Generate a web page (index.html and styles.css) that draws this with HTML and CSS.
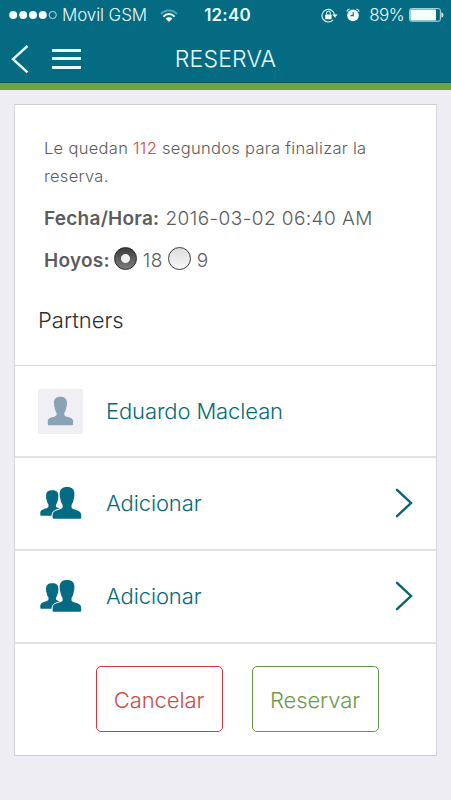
FILE: index.html
```html
<!DOCTYPE html>
<html lang="es">
<head>
    <meta charset="UTF-8">
    <meta name="viewport" content="width=device-width, initial-scale=1">
    <title>Reserva</title>
    <link rel="stylesheet" href="styles.css">
</head>
<body>
    <header class="header">
        <div class="status">
            <div class="status-left">
                <svg class="signal" width="49" height="10" viewBox="0 0 49 10">
                    <circle cx="4.2" cy="5" r="4"/>
                    <circle cx="14.2" cy="5" r="4"/>
                    <circle cx="24" cy="5" r="4"/>
                    <circle cx="33.8" cy="5" r="4"/>
                    <circle class="off" cx="43.7" cy="5" r="3.6"/>
                </svg>
                <span class="carrier">Movil GSM</span>
                <svg class="wifi" width="18" height="13" viewBox="0 0 18 13">
                    <path class="faded" d="M1 5 C5 0.4 13 0.4 17 5"/>
                    <path d="M3.4 7.6 C6.5 4.2 11.5 4.2 14.6 7.6"/>
                    <path class="dot" d="M9 13 L5.6 9.6 C7.4 7.9 10.6 7.9 12.4 9.6 Z"/>
                </svg>
            </div>
            <span class="clock">12:40</span>
            <div class="status-right">
                <svg class="lock" width="17" height="15" viewBox="0 0 17 15">
                    <path class="line" d="M12 11.9 A6.3 6.3 0 1 1 13.6 7.2"/>
                    <path d="M11.3 6.6 H16.5 L13.9 9.8 Z"/>
                    <rect x="4.2" y="6.6" width="6.4" height="4.6" rx="0.6"/>
                    <path class="line" d="M5.5 6.8 V5.2 A1.9 1.9 0 0 1 9.3 5.2 V6.8"/>
                </svg>
                <svg class="alarm" width="14" height="14" viewBox="0 0 14 14">
                    <circle cx="7" cy="7.4" r="5.8"/>
                    <path class="bell" d="M0.8 3.6 Q1.4 1.5 3.6 1 M10.4 1 Q12.6 1.5 13.2 3.6"/>
                    <path class="hand" d="M7.2 4.2 V7.6 H4.6"/>
                </svg>
                <span class="percent">89%</span>
                <svg class="battery" width="35" height="14" viewBox="0 0 35 14">
                    <rect class="shell" x="0.6" y="0.6" width="30.8" height="12.6" rx="1.8"/>
                    <rect x="1.4" y="1.4" width="25.6" height="11" rx="0.6"/>
                    <path d="M32.5 4.2 Q34.4 5 34.4 7 Q34.4 9 32.5 9.8 Z"/>
                </svg>
            </div>
        </div>
        <nav class="navbar">
            <a class="back" href="#" aria-label="Atrás">
                <svg width="18" height="30" viewBox="0 0 18 30">
                    <path d="M16.5 2 L2 15.2 L16.5 28.4"/>
                </svg>
            </a>
            <a class="menu" href="#" aria-label="Menú">
                <span></span>
                <span></span>
                <span></span>
            </a>
            <h1 class="title">RESERVA</h1>
        </nav>
    </header>

    <main class="card">
        <section class="info">
            <p class="timer">Le quedan <span class="seconds">112</span> segundos para finalizar la <br>reserva.</p>
            <p class="detail date"><b>Fecha/Hora:</b> <span>2016-03-02 06:40 AM</span></p>
            <form class="detail holes">
                <b>Hoyos:</b>
                <label><input class="radio" type="radio" name="hoyos" value="18" checked>18</label>
                <label><input class="radio" type="radio" name="hoyos" value="9">9</label>
            </form>
            <h2 class="subtitle">Partners</h2>
        </section>

        <ul class="partners">
            <li class="partner">
                <div class="avatar">
                    <svg width="27" height="30" viewBox="0 0 27 30">
                        <path d="M13.3 0.7 C18 0.7 20.2 3 19.9 7.4 C20 9 19.7 10.4 19.3 11.6 C19 14 18.3 15.6 17.3 17 V19 C18.2 21.6 25.8 20.6 26.1 25 V28.4 Q26 29.2 25.2 29.2 H1.7 Q0.9 29.2 0.8 28.4 V25 C1.1 20.6 8.7 21.6 9.6 19 V17 C8.6 15.6 7.9 14 7.6 11.6 C7.2 10.4 6.9 9 7 7.4 C6.7 3 8.9 0.7 13.3 0.7 Z"/>
                    </svg>
                </div>
                <span class="name">Eduardo Maclean</span>
            </li>
            <li class="partner">
                <div class="people">
                    <svg width="42" height="34" viewBox="0 0 42 34">
                        <path d="M12.2 4.2 C16.6 4.2 18.6 6.1 18.4 10.2 C18.4 11.8 18.2 13 17.8 13.9 C17.4 16.2 16.8 17.4 16 18.5 V20.5 C16.8 22.3 23 22.4 23.4 26 V29.8 H0.9 Q0.3 29.8 0.3 29 V26.6 C0.6 22.4 7.4 23.4 8.5 20.5 V18.5 C7.7 17.4 7 16.2 6.7 13.9 C6.2 13 6 11.8 6.1 10.2 C5.9 6.1 8 4.2 12.2 4.2 Z"/>
                        <path class="front" d="M27 1 C32.4 1 34.6 3.5 34.4 8.6 C34.4 10.4 34.1 12 33.7 13.1 C33.3 15.9 32.5 17.7 31.5 19 V21.6 C32.5 24.4 40.9 23.4 41.2 28.6 V32 Q41 32.8 40.2 32.8 H13.6 Q12.8 32.8 12.6 32 V28.6 C12.9 23.4 21.6 24.4 22.6 21.6 V19 C21.6 17.7 20.8 15.9 20.4 13.1 C20 12 19.7 10.4 19.7 8.6 C19.5 3.5 21.9 1 27 1 Z"/>
                    </svg>
                </div>
                <a class="name" href="#">Adicionar</a>
                <svg class="arrow" width="18" height="30" viewBox="0 0 18 30">
                    <path d="M2 1.8 L16 15 L2 28.2"/>
                </svg>
            </li>
            <li class="partner">
                <div class="people">
                    <svg width="42" height="34" viewBox="0 0 42 34">
                        <path d="M12.2 4.2 C16.6 4.2 18.6 6.1 18.4 10.2 C18.4 11.8 18.2 13 17.8 13.9 C17.4 16.2 16.8 17.4 16 18.5 V20.5 C16.8 22.3 23 22.4 23.4 26 V29.8 H0.9 Q0.3 29.8 0.3 29 V26.6 C0.6 22.4 7.4 23.4 8.5 20.5 V18.5 C7.7 17.4 7 16.2 6.7 13.9 C6.2 13 6 11.8 6.1 10.2 C5.9 6.1 8 4.2 12.2 4.2 Z"/>
                        <path class="front" d="M27 1 C32.4 1 34.6 3.5 34.4 8.6 C34.4 10.4 34.1 12 33.7 13.1 C33.3 15.9 32.5 17.7 31.5 19 V21.6 C32.5 24.4 40.9 23.4 41.2 28.6 V32 Q41 32.8 40.2 32.8 H13.6 Q12.8 32.8 12.6 32 V28.6 C12.9 23.4 21.6 24.4 22.6 21.6 V19 C21.6 17.7 20.8 15.9 20.4 13.1 C20 12 19.7 10.4 19.7 8.6 C19.5 3.5 21.9 1 27 1 Z"/>
                    </svg>
                </div>
                <a class="name" href="#">Adicionar</a>
                <svg class="arrow" width="18" height="30" viewBox="0 0 18 30">
                    <path d="M2 1.8 L16 15 L2 28.2"/>
                </svg>
            </li>
        </ul>

        <div class="actions">
            <button class="btn cancel" type="button">Cancelar</button>
            <button class="btn reserve" type="button">Reservar</button>
        </div>
    </main>
</body>
</html>
```

FILE: styles.css
```css
* {
    box-sizing: border-box;
}
body {
    margin: 0;
    min-height: 800px;
    background-color: #eeedf3;
    font-family: Inter, "Liberation Sans", sans-serif;
    font-weight: 350;
    color: #5c5c5c;
}
h1, h2, p, ul {
    margin: 0;
    padding: 0;
    font-weight: inherit;
    list-style: none;
}
a {
    color: inherit;
    text-decoration: none;
}
svg {
    display: block;
    flex: none;
}

/* header */
.header {
    height: 90px;
    background-color: #046b83;
    border-bottom: 7px solid #6ba443;
    box-shadow: inset 0 -1px 0 #17545a;
    color: #e9fbfd;
}
.status {
    display: grid;
    grid-template-columns: 1fr auto 1fr;
    align-items: center;
    height: 30px;
    padding: 0 7px 0 9px;
    font-size: 17px;
}
.status svg {
    fill: #f4ffff;
}
.status-left, .status-right {
    display: flex;
    align-items: center;
}
.status-right {
    justify-content: flex-end;
}
.signal .off {
    fill: none;
    stroke: #c5e8ee;
    stroke-width: 0.9;
}
.carrier {
    margin-left: 4px;
    letter-spacing: -0.1px;
}
.wifi {
    margin-left: 13px;
}
.status .wifi path {
    fill: none;
    stroke: #f4ffff;
    stroke-width: 2;
}
.status .wifi .faded {
    stroke: #5ba3b1;
}
.status .wifi .dot {
    fill: #f4ffff;
    stroke: none;
}
.clock {
    padding-left: 2px;
    font-weight: 600;
    letter-spacing: 0.2px;
}
.status .line {
    fill: none;
    stroke: #e4f8fa;
    stroke-width: 1.1;
}
.alarm {
    margin-left: 8px;
}
.status .bell {
    fill: none;
    stroke: #f4ffff;
    stroke-width: 1.2;
}
.status .hand {
    fill: none;
    stroke: #046b83;
    stroke-width: 1.2;
}
.percent {
    margin-left: 9px;
    letter-spacing: -0.6px;
}
.battery {
    margin-left: 5px;
}
.status .shell {
    fill: none;
    stroke: #b5dde4;
    stroke-width: 1;
}
.navbar {
    display: grid;
    grid-template-columns: 41px 29px 1fr 81px;
    align-items: center;
    height: 53px;
    padding: 4px 0 0 11px;
}
.back path {
    fill: none;
    stroke: #e9fbfd;
    stroke-width: 2.4;
}
.menu {
    display: flex;
    flex-direction: column;
    gap: 5.5px;
}
.menu span {
    height: 3px;
    background-color: #e9fbfd;
}
.title {
    padding-top: 1px;
    text-align: center;
    font-size: 23px;
    letter-spacing: 0.2px;
    line-height: 30px;
}

/* card */
.card {
    margin: 14px 14px 0;
    height: 652px;
    background-color: white;
    border: 1px solid #cbcad2;
    border-left-color: #d6d5de;
    border-right-color: #d6d5de;
}
.info {
    height: 260px;
    padding: 29px 24px 0 29px;
}
.timer {
    font-size: 16.5px;
    line-height: 28px;
    letter-spacing: 0.3px;
}
.seconds {
    color: #d64545;
}
.detail {
    display: flex;
    align-items: center;
    height: 42px;
    font-size: 19px;
    letter-spacing: 0.44px;
}
.detail b {
    font-weight: 600;
    letter-spacing: 0.25px;
}
.date {
    margin-top: 7px;
    gap: 6px;
}
.holes label {
    display: flex;
    align-items: center;
}
.holes label + label {
    margin-left: 1px;
}
.radio {
    appearance: none;
    width: 23px;
    height: 23px;
    margin: -3px 6px 0 4px;
    border: 1px solid #3c3c3c;
    border-radius: 50%;
    background: linear-gradient(#dcdcdc, #f8f8f8);
}
.radio:checked {
    border-color: #262626;
    background: radial-gradient(circle, #f0f0f0 4px, transparent 5px), linear-gradient(#3c3c3c, #7d7d7d);
}
.subtitle {
    margin: 22px 0 0 -6px;
    font-size: 22px;
    line-height: 34px;
    color: #2e2e2e;
}

/* partners */
.partner {
    display: flex;
    align-items: center;
    height: 93px;
    padding: 0 23px 2px;
    border-top: 2px solid #e2e2e5;
    color: #046b77;
}
.partner:first-child {
    height: 91px;
    padding-bottom: 0;
    border-top: 1px solid #d6d6da;
}
.avatar {
    display: flex;
    justify-content: center;
    align-items: center;
    width: 45px;
    height: 45px;
    padding-right: 1px;
    border-radius: 2px;
    background-color: #efeff4;
    fill: #89a2b6;
}
.people {
    width: 45px;
    padding-left: 2px;
    fill: #046b83;
}
.people .front {
    stroke: white;
    stroke-width: 2;
    paint-order: stroke;
}
.name {
    flex: 1;
    margin-left: 23px;
    font-size: 22px;
    letter-spacing: -0.12px;
}
.arrow path {
    fill: none;
    stroke: #0b6372;
    stroke-width: 2.4;
    stroke-linecap: round;
}

/* buttons */
.actions {
    display: flex;
    justify-content: center;
    gap: 29px;
    height: 113px;
    padding: 22px 0 0 23px;
    border-top: 2px solid #e2e2e5;
}
.btn {
    width: 127px;
    height: 66px;
    padding: 1px 0 0;
    border: 1.5px solid;
    border-radius: 5px;
    background: none;
    font-family: inherit;
    font-size: 22px;
    font-weight: inherit;
    letter-spacing: -0.1px;
}
.cancel {
    color: #cb4b47;
    border-color: #c63f3c;
}
.reserve {
    color: #6d9a48;
    border-color: #649742;
}
```
